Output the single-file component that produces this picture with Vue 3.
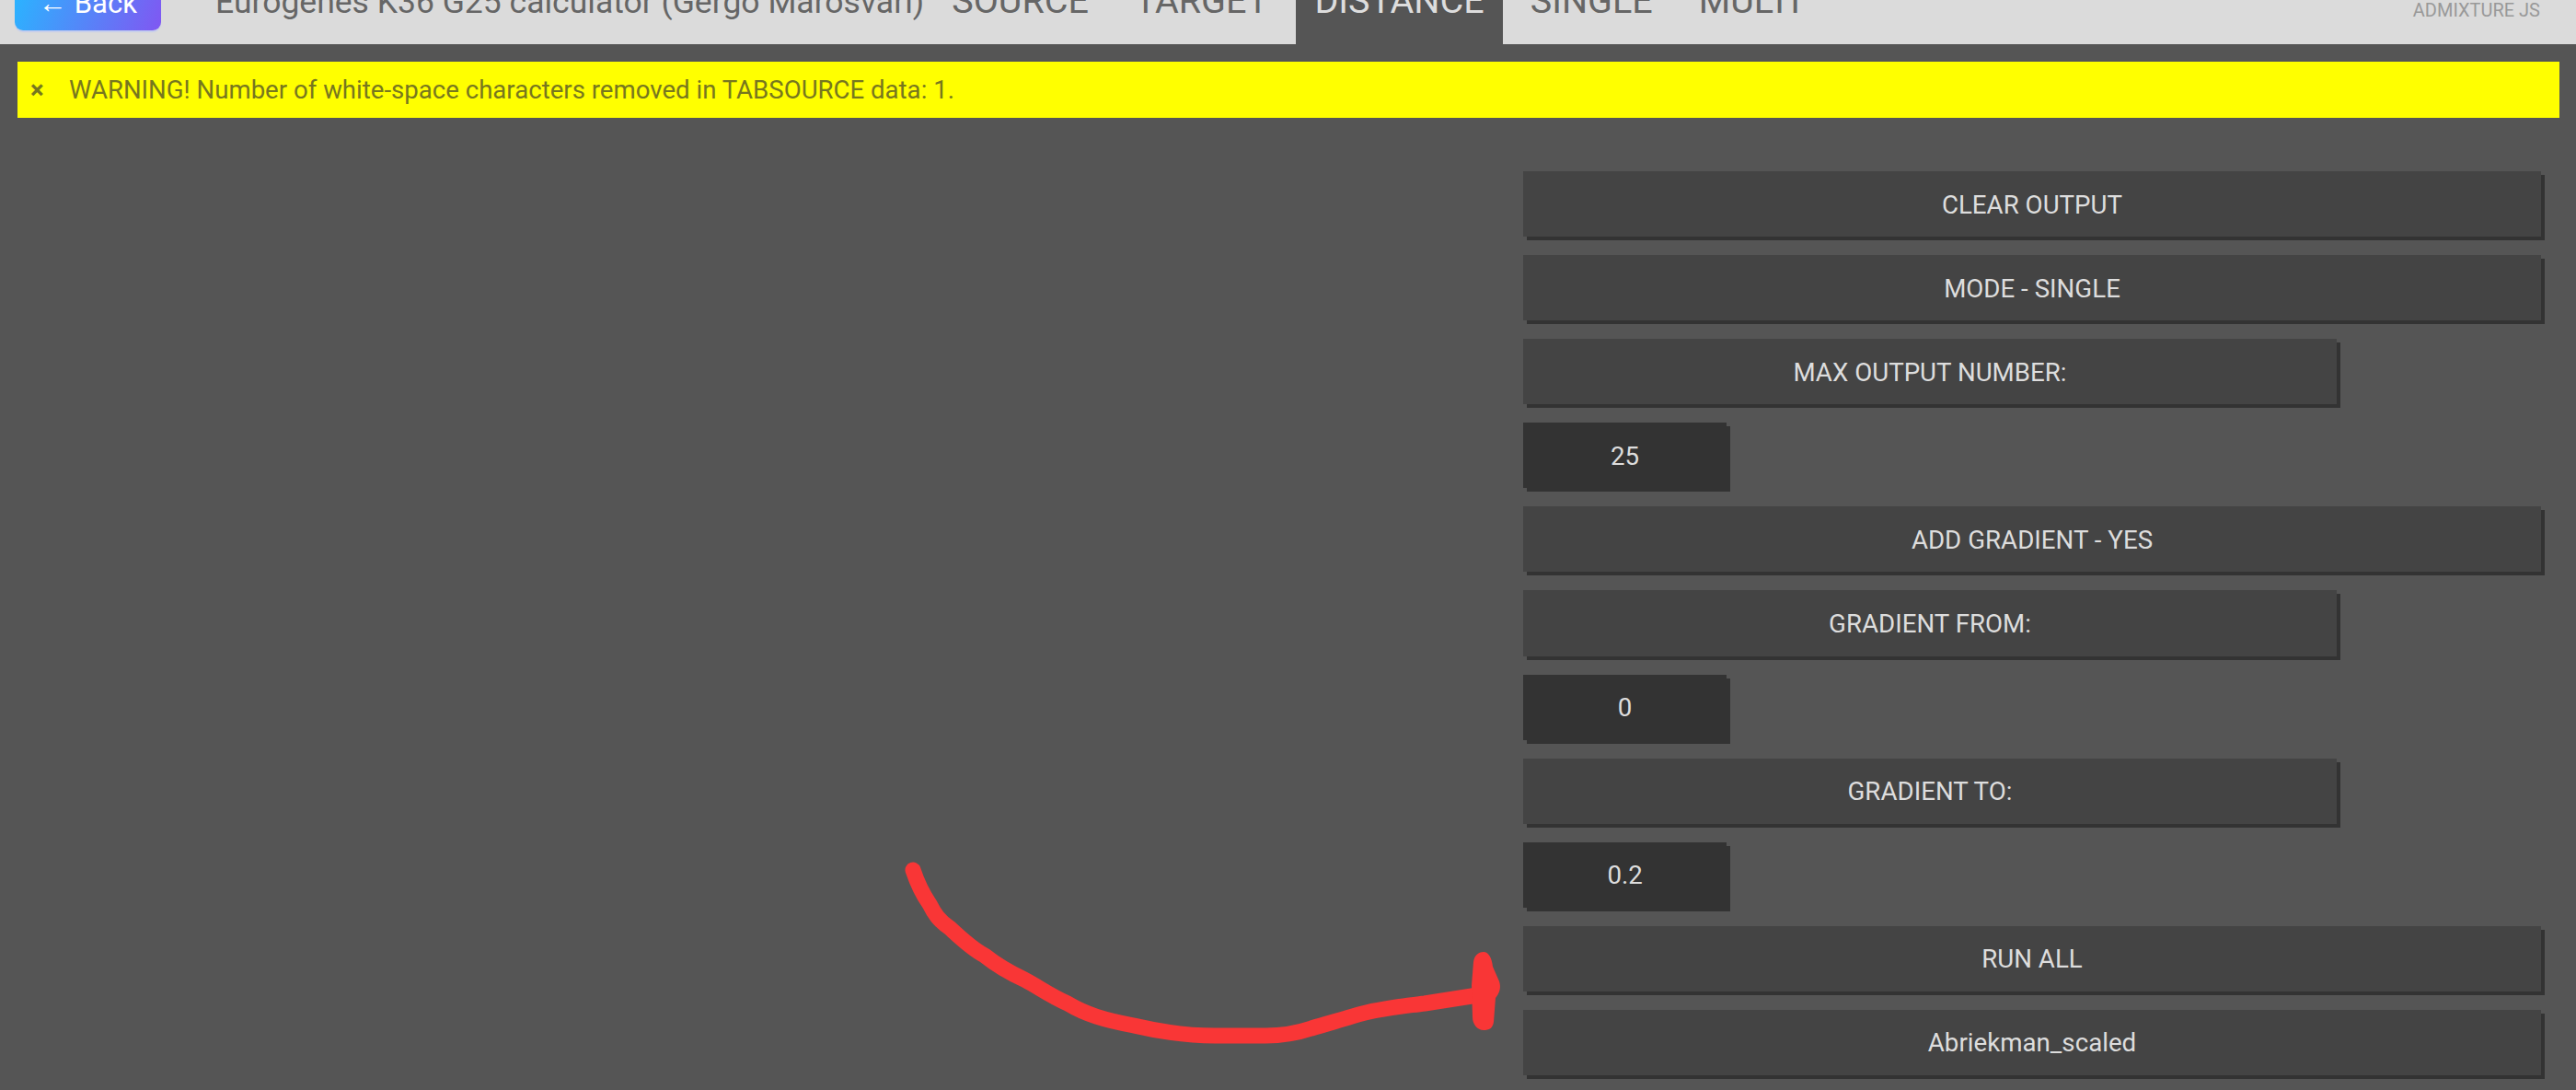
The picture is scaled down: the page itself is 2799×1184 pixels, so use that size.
<script setup>
const tabs = [
  { label: 'SOURCE', active: false },
  { label: 'TARGET', active: false },
  { label: 'DISTANCE', active: true },
  { label: 'SINGLE', active: false },
  { label: 'MULTI', active: false },
]
const controls = [
  { label: 'CLEAR OUTPUT', kind: 'full' },
  { label: 'MODE - SINGLE', kind: 'full' },
  { label: 'MAX OUTPUT NUMBER:', kind: 'label' },
  { label: '25', kind: 'input' },
  { label: 'ADD GRADIENT - YES', kind: 'full' },
  { label: 'GRADIENT FROM:', kind: 'label' },
  { label: '0', kind: 'input' },
  { label: 'GRADIENT TO:', kind: 'label' },
  { label: '0.2', kind: 'input' },
  { label: 'RUN ALL', kind: 'full' },
  { label: 'Abriekman_scaled', kind: 'full' },
]
</script>

<template>
  <div class="page">
    <header class="header">
      <a class="back">← Back</a>
      <h1 class="title">Eurogenes K36 G25 calculator (Gergo Marosvari)</h1>
      <nav class="tabs">
        <span v-for="t in tabs" :key="t.label" class="tab" :class="{ active: t.active }">{{ t.label }}</span>
      </nav>
      <span class="brand">ADMIXTURE JS</span>
    </header>

    <div class="alert">
      <span class="close">×</span>
      <span>WARNING! Number of white-space characters removed in TABSOURCE data: 1.</span>
    </div>

    <main class="panel">
      <div v-for="c in controls" :key="c.label" class="control" :class="c.kind"><span class="caption">{{ c.label }}</span></div>
    </main>

    <svg class="scribble" width="700" height="220" viewBox="950 920 700 220">
      <path
        d="M992 945 C997 960 1003 972 1010 982 C1015 992 1020 1000 1032 1008 C1043 1018 1055 1030 1070 1038 C1085 1050 1100 1058 1113 1064 C1130 1073 1140 1081 1160 1090 C1180 1102 1200 1108 1232 1114 C1262 1121 1290 1125 1320 1125 L1375 1125 C1395 1125 1410 1122 1425 1117 C1445 1111 1460 1107 1476 1102 C1500 1095 1525 1093 1548 1090 L1612 1080"
        fill="none"
        stroke="#f93636"
        stroke-width="17"
        stroke-linecap="round"
        stroke-linejoin="round"
      />
      <path
        d="M1612 1034 C1617 1034 1621 1040 1622 1050 L1629 1066 C1631 1072 1630 1078 1625 1084 L1623 1110 C1622 1117 1618 1119 1612 1119 C1605 1119 1600 1112 1600 1105 L1599 1070 L1601 1045 C1602 1038 1606 1034 1612 1034 Z"
        fill="#f93636"
      />
    </svg>
  </div>
</template>

<style>
html, body {
  margin: 0;
  background: #555;
  overflow: hidden;
}
</style>

<style scoped>
.page {
  position: relative;
  height: 1184px;
  overflow: hidden;
  background: #555;
  color: #ddd;
  font-family: Roboto, "Liberation Sans", sans-serif;
}
.header {
  display: flex;
  align-items: flex-end;
  height: 48px;
  background: #dbdbdb;
  overflow: hidden;
}
.back {
  flex: none;
  width: 159px;
  height: 40px;
  margin: 0 0 15px 16px;
  display: flex;
  align-items: flex-end;
  justify-content: center;
  padding-bottom: 13px;
  box-sizing: border-box;
  border-radius: 0 0 9px 9px;
  background: linear-gradient(110deg, #2ab4ff, #8057f2);
  box-shadow: 0 2px 1px #c5cdec;
  color: #fff;
  font-size: 31px;
  line-height: 32px;
  white-space: nowrap;
}
.title {
  flex: none;
  margin: 0 10px 26px 59px;
  font-size: 35.5px;
  font-weight: 400;
  line-height: 40px;
  color: #666;
  white-space: nowrap;
}
.tabs {
  display: flex;
  gap: 10px;
  align-self: stretch;
  align-items: flex-end;
}
.tab {
  padding: 0 20px 27px;
  font-size: 39.5px;
  line-height: 40px;
  color: #666;
}
.tab.active {
  background: #555;
  color: #ddd;
}
.brand {
  margin: 0 39px 25px auto;
  font-size: 20px;
  line-height: 24px;
  color: #999;
}
.alert {
  display: flex;
  align-items: center;
  height: 61px;
  margin: 19px 18px 0 19px;
  background: #ff0;
  color: #77771f;
  font-size: 27.6px;
}
.close {
  width: 56px;
  padding-left: 14px;
  box-sizing: border-box;
  font-weight: 700;
}
.panel {
  display: flex;
  flex-direction: column;
  align-items: flex-start;
  gap: 20px;
  width: 1106px;
  margin: 58px 38px 0 auto;
}
.control {
  display: flex;
  align-items: center;
  justify-content: center;
  height: 71.1px;
  background: #444;
  box-shadow: 4px 4px 0 #333;
  font-size: 27.7px;
}
.caption {
  padding-top: 1px;
}
.full { width: 100%; }
.label { width: 884px; }
.input {
  width: 20%;
  background: #333;
}
.scribble {
  position: absolute;
  left: 950px;
  top: 920px;
}
</style>
